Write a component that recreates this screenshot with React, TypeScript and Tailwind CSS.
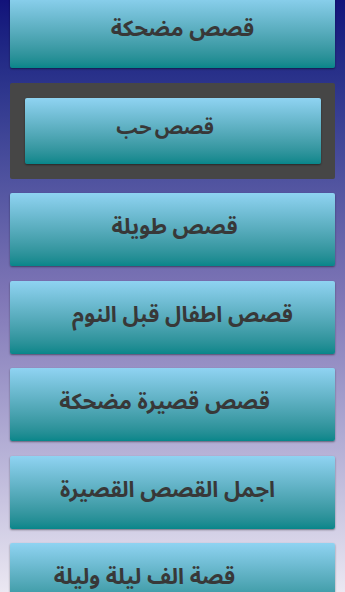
import React from "react";

const items = [
  { title: "قصص مضحكة", shift: "pl-[20px]" },
  { title: "قصص حب", shift: "pr-[16px]", active: true },
  { title: "قصص طويلة", shift: "pl-[4px]" },
  { title: "قصص اطفال قبل النوم", shift: "pl-[20px]" },
  { title: "قصص قصيرة مضحكة", shift: "pr-[16px]" },
  { title: "اجمل القصص القصيرة", shift: "pr-[10px]" },
  { title: "قصة الف ليلة وليلة", shift: "pr-[56px]" },
];

function StoryButton({
  title,
  shift,
  small,
}: {
  title: string;
  shift: string;
  small?: boolean;
}) {
  return (
    <div
      className={`flex items-center justify-center h-full w-full pb-[5px] rounded-[2px] bg-gradient-to-b from-[#8fd3f2] to-[#06868a] shadow-[0_1px_2px_rgba(0,0,0,0.45)] ${shift}`}
    >
      <span
        className={
          small
            ? "text-[20px] font-bold text-[#383838] leading-none [word-spacing:-2px]"
            : "text-[22px] font-bold text-[#383838] leading-none"
        }
      >
        {title}
      </span>
    </div>
  );
}

function App() {
  return (
    <main
      dir="rtl"
      className="w-[345px] h-[592px] overflow-hidden bg-gradient-to-b from-[#12127a] via-[#7f76b6] to-[#ebe8f2]"
      style={{ fontFamily: '"Noto Sans Arabic", "DejaVu Sans", sans-serif' }}
    >
      <div className="flex flex-col gap-[14.5px] px-[10px] -mt-[5px]">
        {items.map((item) =>
          item.active ? (
            <div
              key={item.title}
              className="h-[96px] bg-[#464646] rounded-[2px] p-[15px] pr-[14px]"
            >
              <StoryButton title={item.title} shift={item.shift} small />
            </div>
          ) : (
            <div key={item.title} className="h-[73px]">
              <StoryButton title={item.title} shift={item.shift} />
            </div>
          )
        )}
      </div>
    </main>
  );
}

export default App;
